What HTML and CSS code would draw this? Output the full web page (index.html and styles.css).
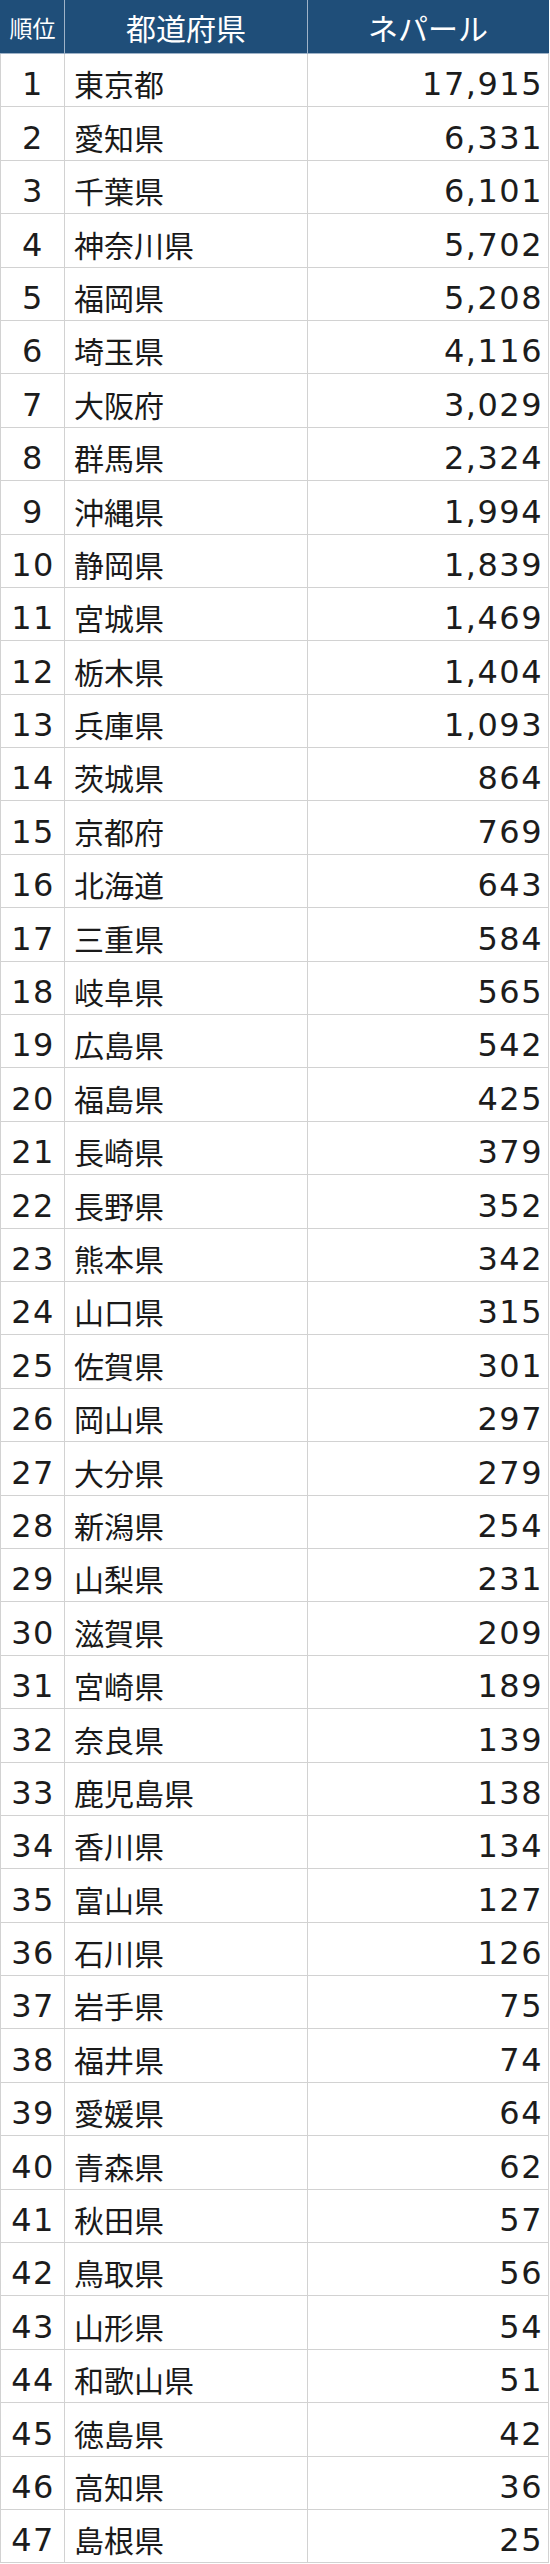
FILE: index.html
```html
<!DOCTYPE html>
<html lang="ja">
<head>
<meta charset="utf-8">
<title>都道府県別 ネパール</title>
<link rel="stylesheet" href="styles.css">
</head>
<body>
<table class="ranking">
  <colgroup>
    <col class="col-rank">
    <col class="col-pref">
    <col class="col-value">
  </colgroup>
  <thead>
    <tr>
      <th class="h-rank">順位</th>
      <th class="h-pref">都道府県</th>
      <th class="h-value">ネパール</th>
    </tr>
  </thead>
  <tbody>
    <tr><td class="rank">1</td><td class="pref">東京都</td><td class="value">17,915</td></tr>
    <tr><td class="rank">2</td><td class="pref">愛知県</td><td class="value">6,331</td></tr>
    <tr><td class="rank">3</td><td class="pref">千葉県</td><td class="value">6,101</td></tr>
    <tr><td class="rank">4</td><td class="pref">神奈川県</td><td class="value">5,702</td></tr>
    <tr><td class="rank">5</td><td class="pref">福岡県</td><td class="value">5,208</td></tr>
    <tr><td class="rank">6</td><td class="pref">埼玉県</td><td class="value">4,116</td></tr>
    <tr><td class="rank">7</td><td class="pref">大阪府</td><td class="value">3,029</td></tr>
    <tr><td class="rank">8</td><td class="pref">群馬県</td><td class="value">2,324</td></tr>
    <tr><td class="rank">9</td><td class="pref">沖縄県</td><td class="value">1,994</td></tr>
    <tr><td class="rank">10</td><td class="pref">静岡県</td><td class="value">1,839</td></tr>
    <tr><td class="rank">11</td><td class="pref">宮城県</td><td class="value">1,469</td></tr>
    <tr><td class="rank">12</td><td class="pref">栃木県</td><td class="value">1,404</td></tr>
    <tr><td class="rank">13</td><td class="pref">兵庫県</td><td class="value">1,093</td></tr>
    <tr><td class="rank">14</td><td class="pref">茨城県</td><td class="value">864</td></tr>
    <tr><td class="rank">15</td><td class="pref">京都府</td><td class="value">769</td></tr>
    <tr><td class="rank">16</td><td class="pref">北海道</td><td class="value">643</td></tr>
    <tr><td class="rank">17</td><td class="pref">三重県</td><td class="value">584</td></tr>
    <tr><td class="rank">18</td><td class="pref">岐阜県</td><td class="value">565</td></tr>
    <tr><td class="rank">19</td><td class="pref">広島県</td><td class="value">542</td></tr>
    <tr><td class="rank">20</td><td class="pref">福島県</td><td class="value">425</td></tr>
    <tr><td class="rank">21</td><td class="pref">長崎県</td><td class="value">379</td></tr>
    <tr><td class="rank">22</td><td class="pref">長野県</td><td class="value">352</td></tr>
    <tr><td class="rank">23</td><td class="pref">熊本県</td><td class="value">342</td></tr>
    <tr><td class="rank">24</td><td class="pref">山口県</td><td class="value">315</td></tr>
    <tr><td class="rank">25</td><td class="pref">佐賀県</td><td class="value">301</td></tr>
    <tr><td class="rank">26</td><td class="pref">岡山県</td><td class="value">297</td></tr>
    <tr><td class="rank">27</td><td class="pref">大分県</td><td class="value">279</td></tr>
    <tr><td class="rank">28</td><td class="pref">新潟県</td><td class="value">254</td></tr>
    <tr><td class="rank">29</td><td class="pref">山梨県</td><td class="value">231</td></tr>
    <tr><td class="rank">30</td><td class="pref">滋賀県</td><td class="value">209</td></tr>
    <tr><td class="rank">31</td><td class="pref">宮崎県</td><td class="value">189</td></tr>
    <tr><td class="rank">32</td><td class="pref">奈良県</td><td class="value">139</td></tr>
    <tr><td class="rank">33</td><td class="pref">鹿児島県</td><td class="value">138</td></tr>
    <tr><td class="rank">34</td><td class="pref">香川県</td><td class="value">134</td></tr>
    <tr><td class="rank">35</td><td class="pref">富山県</td><td class="value">127</td></tr>
    <tr><td class="rank">36</td><td class="pref">石川県</td><td class="value">126</td></tr>
    <tr><td class="rank">37</td><td class="pref">岩手県</td><td class="value">75</td></tr>
    <tr><td class="rank">38</td><td class="pref">福井県</td><td class="value">74</td></tr>
    <tr><td class="rank">39</td><td class="pref">愛媛県</td><td class="value">64</td></tr>
    <tr><td class="rank">40</td><td class="pref">青森県</td><td class="value">62</td></tr>
    <tr><td class="rank">41</td><td class="pref">秋田県</td><td class="value">57</td></tr>
    <tr><td class="rank">42</td><td class="pref">鳥取県</td><td class="value">56</td></tr>
    <tr><td class="rank">43</td><td class="pref">山形県</td><td class="value">54</td></tr>
    <tr><td class="rank">44</td><td class="pref">和歌山県</td><td class="value">51</td></tr>
    <tr><td class="rank">45</td><td class="pref">徳島県</td><td class="value">42</td></tr>
    <tr><td class="rank">46</td><td class="pref">高知県</td><td class="value">36</td></tr>
    <tr><td class="rank">47</td><td class="pref">島根県</td><td class="value">25</td></tr>
  </tbody>
</table>
</body>
</html>
```
FILE: styles.css
```css
html, body {
  margin: 0;
  padding: 0;
  background: #ffffff;
}

body {
  font-family: "Noto Sans CJK JP", "Noto Sans", sans-serif;
  color: #1a1a1a;
}

.ranking {
  width: 548px;
  border-collapse: collapse;
  table-layout: fixed;
}

.col-rank { width: 64px; }
.col-pref { width: 243px; }
.col-value { width: 241px; }

.ranking th {
  height: 53px;
  padding: 0;
  background: #1f4e79;
  color: #ffffff;
  font-weight: 400;
  font-size: 30px;
  line-height: 30px;
  text-align: center;
  vertical-align: middle;
  border: 1px solid #9fb3c8;
  border-top-color: #1f4e79;
  box-sizing: border-box;
}

.ranking th.h-rank {
  font-size: 23px;
  border-left-color: #1f4e79;
}

.ranking th.h-value {
  border-right-color: #1f4e79;
}

.ranking td {
  height: 53.4px;
  padding: 0 0 8px 0;
  font-size: 30px;
  line-height: 30px;
  vertical-align: bottom;
  border: 1px solid #d2d2d2;
  box-sizing: border-box;
  white-space: nowrap;
}

.ranking td.rank,
.ranking td.value {
  font-family: "DejaVu Sans", "Noto Sans CJK JP", sans-serif;
  font-size: 32px;
  letter-spacing: 1.5px;
  padding-bottom: 7px;
  color: #1c1c1c;
}

.ranking td.rank {
  text-align: center;
  padding-left: 1px;
}

.ranking td.pref {
  text-align: left;
  padding-left: 9px;
}

.ranking td.value {
  text-align: right;
  padding-right: 5px;
}
```
